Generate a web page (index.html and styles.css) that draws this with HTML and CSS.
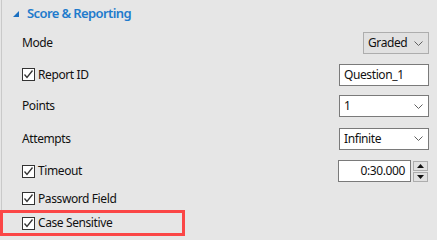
FILE: index.html
```html
<!DOCTYPE html>
<html>
<head>
<meta charset="utf-8">
<link rel="stylesheet" href="styles.css">
</head>
<body>
<div class="page">
  <div class="panel">
    <div class="header">
      <svg class="expander" width="6" height="6" viewBox="0 0 6 6"><polygon points="6,0 6,6 0,6" fill="#1a6fc0"/></svg>
      <span class="title">Score &amp; Reporting</span>
    </div>
    <div class="row r-mode">
      <span class="label">Mode</span>
      <div class="combo combo-flat w-graded"><span>Graded</span><svg class="chev" width="9" height="5" viewBox="0 0 9 5"><polyline points="0.5,0.5 4.5,4.5 8.5,0.5" fill="none" stroke="#606060" stroke-width="1"/></svg></div>
    </div>
    <div class="row r-report">
      <label class="check"><span class="box"><svg width="11" height="11" viewBox="0 0 11 11"><polyline points="1.5,5.5 4,8.5 9.5,1.5" fill="none" stroke="#333" stroke-width="1.3"/></svg></span><span>Report ID</span></label>
      <div class="textbox w-text"><span>Question_1</span></div>
    </div>
    <div class="row r-points">
      <span class="label">Points</span>
      <div class="combo w-combo"><span>1</span><svg class="chev" width="9" height="5" viewBox="0 0 9 5"><polyline points="0.5,0.5 4.5,4.5 8.5,0.5" fill="none" stroke="#606060" stroke-width="1"/></svg></div>
    </div>
    <div class="row r-attempts">
      <span class="label">Attempts</span>
      <div class="combo w-combo"><span>Infinite</span><svg class="chev" width="9" height="5" viewBox="0 0 9 5"><polyline points="0.5,0.5 4.5,4.5 8.5,0.5" fill="none" stroke="#606060" stroke-width="1"/></svg></div>
    </div>
    <div class="row r-timeout">
      <label class="check"><span class="box"><svg width="11" height="11" viewBox="0 0 11 11"><polyline points="1.5,5.5 4,8.5 9.5,1.5" fill="none" stroke="#333" stroke-width="1.3"/></svg></span><span>Timeout</span></label>
      <div class="spinner">
        <div class="textbox w-spin right"><span>0:30.000</span></div>
        <div class="spins">
          <div class="spin"><svg width="7" height="4" viewBox="0 0 7 4"><polygon points="0,4 7,4 3.5,0" fill="#111"/></svg></div>
          <div class="spin"><svg width="7" height="4" viewBox="0 0 7 4"><polygon points="0,0 7,0 3.5,4" fill="#111"/></svg></div>
        </div>
      </div>
    </div>
    <div class="row r-password">
      <label class="check"><span class="box"><svg width="11" height="11" viewBox="0 0 11 11"><polyline points="1.5,5.5 4,8.5 9.5,1.5" fill="none" stroke="#333" stroke-width="1.3"/></svg></span><span>Password Field</span></label>
    </div>
  </div>
  <div class="highlight">
    <label class="check"><span class="box"><svg width="11" height="11" viewBox="0 0 11 11"><polyline points="1.5,5.5 4,8.5 9.5,1.5" fill="none" stroke="#333" stroke-width="1.3"/></svg></span><span>Case Sensitive</span></label>
  </div>
</div>
</body>
</html>
```
FILE: styles.css
```css
html, body {
  margin: 0;
  padding: 0;
  background: #e6e6e6;
}
body {
  width: 437px;
  height: 237px;
  overflow: hidden;
  font-family: "Noto Sans", "Open Sans", sans-serif;
  font-size: 12px;
  letter-spacing: -0.4px;
  color: #111;
}
.page {
  display: flex;
  flex-direction: column;
}
.panel {
  margin-left: 1px;
  border-left: 1px solid #c9c9c9;
  display: flex;
  flex-direction: column;
}
.header {
  height: 27px;
  display: flex;
  align-items: center;
  padding-left: 11px;
  gap: 8px;
}
.expander { display: block; margin-top: 1px; }
.title {
  font-size: 13px;
  font-weight: 600;
  letter-spacing: -0.6px;
  color: #1f7bcc;
  line-height: 1;
}
.row {
  display: flex;
  align-items: center;
  justify-content: space-between;
  padding-left: 20px;
  padding-right: 8px;
}
.r-mode { height: 32px; }
.r-report { height: 31px; }
.r-points { height: 32px; }
.r-attempts { height: 33px; }
.r-timeout { height: 32px; }
.r-password { height: 23px; }
.label { line-height: 1; }
.check {
  display: flex;
  align-items: center;
  gap: 3px;
  line-height: 1;
}
.box {
  width: 11px;
  height: 11px;
  border: 1px solid #333;
  background: #fff;
  display: flex;
}
.box svg { display: block; }
.combo, .textbox {
  box-sizing: border-box;
  height: 22px;
  display: flex;
  align-items: center;
  justify-content: space-between;
  border: 1px solid #7a7a7a;
  background: #fff;
  padding: 0 5px 0 4px;
  line-height: 1;
}
.combo-flat {
  background: #e1e1e1;
  border-color: #adadad;
  padding-left: 4px;
  padding-right: 5px;
}
.w-graded { width: 66px; }
.w-text { width: 90px; }
.w-combo { width: 90px; }
.w-spin { width: 73px; }
.right { justify-content: flex-end; padding-right: 5px; }
.chev { display: block; }
.spinner {
  display: flex;
  align-items: center;
  gap: 2px;
  margin-right: 1px;
}
.spins {
  display: flex;
  flex-direction: column;
  gap: 1px;
}
.spin {
  box-sizing: border-box;
  width: 15px;
  height: 10px;
  border: 1px solid #adadad;
  background: #e1e1e1;
  display: flex;
  align-items: center;
  justify-content: center;
}
.spin svg { display: block; }
.highlight {
  box-sizing: border-box;
  width: 185px;
  height: 26px;
  border: 3px solid #fb4646;
  display: flex;
  align-items: center;
  padding-left: 19px;
}
```
